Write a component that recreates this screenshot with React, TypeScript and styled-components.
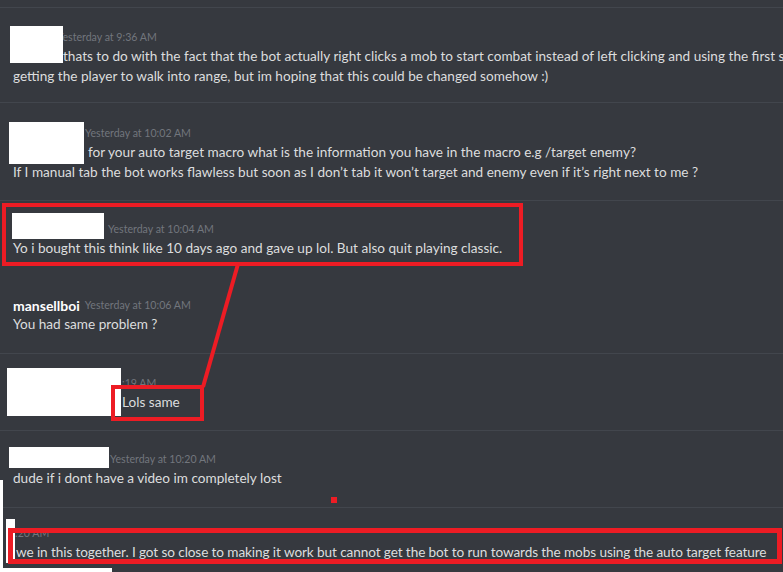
import React from "react";
import styled, { createGlobalStyle } from "styled-components";

const Global = createGlobalStyle`
  html, body { margin: 0; padding: 0; background: #36393f; }
  * { box-sizing: border-box; }
`;

const Page = styled.div`
  position: relative;
  width: 783px;
  height: 572px;
  overflow: hidden;
  background: #36393f;
  font-family: Lato, "Open Sans", sans-serif;
  color: #dcddde;
  padding-top: 7px;
  display: flex;
  flex-direction: column;
`;

const Divider = styled.div`
  height: 1px;
  background: #42464d;
  flex: none;
`;

const Group = styled.section<{ $pt: number; $pb: number }>`
  position: relative;
  padding: ${(p) => p.$pt}px 0 ${(p) => p.$pb}px 13px;
  display: flex;
  flex-direction: column;
  flex: none;
`;

const Header = styled.div<{ $indent?: number }>`
  height: 18px;
  display: flex;
  align-items: center;
  gap: 5px;
  padding-left: ${(p) => p.$indent ?? 0}px;
  white-space: nowrap;
`;

const Username = styled.span`
  color: #ffffff;
  font-weight: 700;
  font-size: 14px;
`;

const Timestamp = styled.span`
  color: #72767d;
  font-size: 10.6px;
`;

const Line = styled.div<{ $indent?: number; $tight?: boolean }>`
  height: 20px;
  line-height: 20px;
  font-size: 13.6px;
  letter-spacing: ${(p) => (p.$tight ? "-0.1px" : "normal")};
  white-space: nowrap;
  padding-left: ${(p) => p.$indent ?? 0}px;
`;

const Redaction = styled.div<{ $top: number; $left: number; $w: number; $h: number }>`
  position: absolute;
  top: ${(p) => p.$top}px;
  left: ${(p) => p.$left}px;
  width: ${(p) => p.$w}px;
  height: ${(p) => p.$h}px;
  background: #ffffff;
`;

const RedBox = styled.div<{ $top: number; $left: number; $w: number; $h: number; $b?: number }>`
  position: absolute;
  top: ${(p) => p.$top}px;
  left: ${(p) => p.$left}px;
  width: ${(p) => p.$w}px;
  height: ${(p) => p.$h}px;
  border: ${(p) => p.$b ?? 4}px solid #ed1c24;
  pointer-events: none;
`;

const RedDot = styled.div`
  position: absolute;
  top: 66px;
  left: 331px;
  width: 6px;
  height: 6px;
  background: #ed1c24;
`;

const Overlay = styled.svg`
  position: absolute;
  inset: 0;
  pointer-events: none;
`;

const EdgeWhite = styled.div<{ $top: number; $left: number; $w: number; $h: number }>`
  position: absolute;
  top: ${(p) => p.$top}px;
  left: ${(p) => p.$left}px;
  width: ${(p) => p.$w}px;
  height: ${(p) => p.$h}px;
  background: #ffffff;
`;

export default function App() {
  return (
    <>
      <Global />
      <Page>
        <Divider />
        <Group $pt={20} $pb={16}>
          <Header $indent={44}>
            <Timestamp>Yesterday at 9:36 AM</Timestamp>
          </Header>
          <Line $indent={50}>
            thats to do with the fact that the bot actually right clicks a mob to start combat instead of left clicking and using the first spell
          </Line>
          <Line>getting the player to walk into range, but im hoping that this could be changed somehow :)</Line>
          <Redaction $top={18} $left={10} $w={53} $h={37} />
        </Group>
        <Divider />
        <Group $pt={21} $pb={18}>
          <Header $indent={72}>
            <Timestamp>Yesterday at 10:02 AM</Timestamp>
          </Header>
          <Line $indent={75}>
            for your auto target macro what is the information you have in the macro e.g /target enemy?
          </Line>
          <Line>
            If I manual tab the bot works flawless but soon as I don’t tab it won’t target and enemy even if it’s right next to me ?
          </Line>
          <Redaction $top={19} $left={9} $w={75} $h={42} />
        </Group>
        <Divider />
        <Group $pt={19} $pb={38}>
          <Header $indent={95}>
            <Timestamp>Yesterday at 10:04 AM</Timestamp>
          </Header>
          <Line>Yo i bought this think like 10 days ago and gave up lol. But also quit playing classic.</Line>
          <Redaction $top={12} $left={12} $w={92} $h={26} />
          <RedBox $top={2} $left={2} $w={521} $h={63} />
        </Group>
        <Group $pt={0} $pb={19}>
          <Header>
            <Username>mansellboi</Username>
            <Timestamp>Yesterday at 10:06 AM</Timestamp>
          </Header>
          <Line>You had same problem ?</Line>
        </Group>
        <Divider />
        <Group $pt={20} $pb={18}>
          <Header $indent={109}>
            <Timestamp>:19 AM</Timestamp>
          </Header>
          <Line $indent={109}>Lols same</Line>
          <Redaction $top={14} $left={7} $w={114} $h={48} />
          <RedBox $top={31} $left={111} $w={93} $h={36} />
        </Group>
        <Divider />
        <Group $pt={19} $pb={19}>
          <Header $indent={97}>
            <Timestamp>Yesterday at 10:20 AM</Timestamp>
          </Header>
          <Line>dude if i dont have a video im completely lost</Line>
          <Redaction $top={16} $left={9} $w={100} $h={21} />
          <RedDot />
        </Group>
        <Divider />
        <Group $pt={16} $pb={0}>
          <Header $indent={2}>
            <Timestamp>:20 AM</Timestamp>
          </Header>
          <Line $indent={3} $tight>
            we in this together. I got so close to making it work but cannot get the bot to run towards the mobs using the auto target feature
          </Line>
          <Redaction $top={11} $left={6} $w={9} $h={44} />
          <RedBox $top={20} $left={8} $w={774} $h={36} $b={5} />
        </Group>
        <EdgeWhite $top={480} $left={0} $w={3} $h={92} />
        <EdgeWhite $top={568} $left={0} $w={112} $h={4} />
        <Overlay width="783" height="572" viewBox="0 0 783 572">
          <line x1="238" y1="264" x2="203" y2="387" stroke="#ed1c24" strokeWidth="4" />
        </Overlay>
      </Page>
    </>
  );
}
